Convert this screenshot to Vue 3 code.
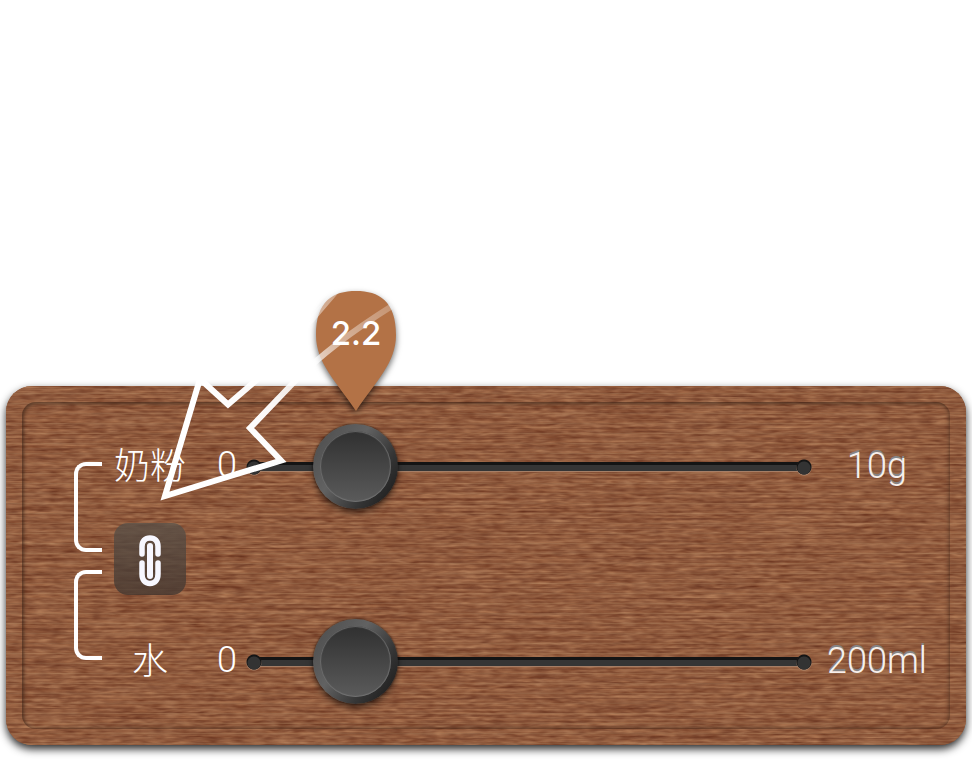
<script setup>
import { computed, ref } from 'vue'

const powder = ref(14.1)
const water = ref(14.1)
const linked = ref(true)

const reading = computed(() => Math.min(10, powder.value * 0.156).toFixed(1))

function powderMoved() {
  if (linked.value) water.value = powder.value
}

function waterMoved() {
  if (linked.value) powder.value = water.value
}
</script>

<template>
  <main class="page">
    <section class="board">
      <svg class="grain" aria-hidden="true">
        <defs>
          <filter id="wood" x="0" y="0" width="100%" height="100%" color-interpolation-filters="sRGB">
            <feTurbulence type="fractalNoise" baseFrequency="0.07 0.32" numOctaves="2" seed="8" result="fibre" />
            <feTurbulence type="fractalNoise" baseFrequency="0.012 0.4" numOctaves="2" seed="3" result="thread" />
            <feComposite in="fibre" in2="thread" operator="arithmetic" k2="0.55" k3="0.5" />
            <feColorMatrix
              values="0.46 0 0 0 0.335
                      0.46 0.04 0 0 0.105
                      0.36 0.06 0 0 0.03
                      0 0 0 0 1"
            />
          </filter>
          <pattern id="threads" width="240" height="10" patternUnits="userSpaceOnUse">
            <path d="M0 2.500H240" stroke="#5e3222" stroke-opacity="0.2" />
            <path d="M0 7.500H240" stroke="#a58a62" stroke-opacity="0.24" />
          </pattern>
        </defs>
        <rect width="100%" height="100%" filter="url(#wood)" />
        <rect width="100%" height="100%" fill="url(#threads)" />
      </svg>

      <div class="panel">
        <div class="brackets" aria-hidden="true">
          <span class="bracket"></span>
          <span class="bracket"></span>
        </div>

        <label class="name" for="powder">奶粉</label>
        <span class="min">0</span>
        <div class="slider">
          <input id="powder" v-model.number="powder" type="range" min="0" max="100" step="0.1" @input="powderMoved" />
          <div class="rail">
            <output class="bubble" for="powder" :style="{ left: powder + '%' }">
              <svg class="drop" viewBox="0 0 82 120" aria-hidden="true">
                <path d="M41 0C64 0 81 10 81 44C81 72 61 90 41 120C21 90 1 72 1 44C1 10 18 0 41 0Z" fill="#b37246" />
              </svg>
              <span class="reading">{{ reading }}</span>
            </output>
          </div>
        </div>
        <span class="max">10g</span>

        <button class="link" type="button" aria-label="联动" :aria-pressed="linked" @click="linked = !linked">
          <svg width="24" height="52" viewBox="0 0 24 52" fill="none" stroke="#f7f7ff" stroke-linecap="round" aria-hidden="true">
            <path d="M4 19V11.500C4 6 7 3 12 3S20 6 20 11.500V19" stroke-width="5.500" />
            <path d="M4 28V39C4 45 7 48.500 12 48.500S20 45 20 39V28" stroke-width="5.500" />
            <path d="M12 11V41" stroke-width="6" />
          </svg>
        </button>

        <label class="name" for="water">水</label>
        <span class="min">0</span>
        <div class="slider">
          <input id="water" v-model.number="water" type="range" min="0" max="100" step="0.1" @input="waterMoved" />
        </div>
        <span class="max">200ml</span>
      </div>

      <svg class="arrow" viewBox="0 0 260 220" fill="none" stroke-width="6" aria-hidden="true">
        <defs>
          <linearGradient id="fade" gradientUnits="userSpaceOnUse" x1="90" y1="150" x2="240" y2="20">
            <stop offset="0" stop-color="#fff" />
            <stop offset="0.25" stop-color="#fff" stop-opacity="0.95" />
            <stop offset="0.5" stop-color="#fff" stop-opacity="0.75" />
            <stop offset="0.7" stop-color="#fff" stop-opacity="0.45" />
            <stop offset="1" stop-color="#fff" stop-opacity="0.25" />
          </linearGradient>
        </defs>
        <path
          d="M187 4Q148 50 110 91L78 118.500L50 93L15 210L131 174.500L100 142L146 94Q180 59 242 20"
          stroke="url(#fade)"
        />
      </svg>
    </section>
  </main>
</template>

<style>
body {
  margin: 0;
  background: #fff;
}
</style>

<style scoped>
.page {
  padding: 386px 6px 14px;
  font-family: Roboto, "Noto Sans CJK SC", sans-serif;
  color: #fff;
}

.board {
  position: relative;
  padding: 16px;
  border-radius: 26px;
  background: #925b3e;
  box-shadow: 0 4px 8px rgba(0, 0, 0, 0.85);
}

.grain {
  position: absolute;
  inset: 0;
  width: 100%;
  height: 100%;
  border-radius: 26px;
}

.panel {
  position: relative;
  display: grid;
  grid-template-columns: 28px 72px 71px minmax(180px, 1fr) 130px;
  grid-template-rows: 85px auto 85px;
  align-items: center;
  padding: 22px 8px 25px 52px;
  border-radius: 14px;
  box-shadow:
    inset 0 0 4px 1px rgba(45, 28, 18, 0.5),
    inset 2px 2px 3px rgba(45, 28, 18, 0.3);
}

.brackets {
  grid-row: 1 / 4;
  align-self: start;
  display: flex;
  flex-direction: column;
  gap: 18px;
  padding-top: 38px;
}

.bracket {
  height: 82px;
  border: 4px solid #fff;
  border-right: 0;
  border-radius: 12px 0 0 12px;
}

.name {
  margin: 0 -12px 0 12px;
  font-size: 36px;
  font-weight: 300;
  line-height: 48px;
  text-align: center;
  white-space: nowrap;
}

.min,
.max {
  padding-bottom: 4px;
  font-size: 36px;
  font-weight: 300;
  line-height: 48px;
}

.min {
  padding-right: 8px;
  text-align: right;
}

.max {
  padding-bottom: 2px;
  color: #f6efec;
  text-align: center;
  text-shadow: 0 -2px 0 #858587;
}

.slider {
  position: relative;
  display: grid;
  height: 85px;
  background:
    radial-gradient(circle at 9px 44px, #333 6px, transparent 7px),
    radial-gradient(circle at calc(100% - 8px) 44px, #333 6px, transparent 7px),
    radial-gradient(circle at 9px 43px, #151515 7px, transparent 8px),
    radial-gradient(circle at calc(100% - 8px) 43px, #151515 7px, transparent 8px),
    radial-gradient(circle at 9px 44px, rgba(185, 150, 127, 0.7) 7px, transparent 8px),
    radial-gradient(circle at calc(100% - 8px) 44px, rgba(185, 150, 127, 0.7) 7px, transparent 8px),
    linear-gradient(transparent 38px, #141414 38px, #141414 41px, #353535 41px, #353535 47px, #a57e66 47px, #a57e66 48px, transparent 48px)
      8px 0 / calc(100% - 16px) 100% no-repeat;
}

.slider input {
  appearance: none;
  width: 100%;
  height: 85px;
  margin: 0;
  background: transparent;
  cursor: pointer;
}

.slider input::-webkit-slider-thumb {
  appearance: none;
  box-sizing: border-box;
  width: 85px;
  height: 85px;
  border: 7px solid transparent;
  border-radius: 50%;
  background:
    linear-gradient(#303030, #5b5b5b) padding-box,
    linear-gradient(125deg, #505050 10%, #626262 40%, #353535 70%, #202020 90%) border-box;
  box-shadow:
    inset 0 0 1px 1px rgba(125, 125, 125, 0.7),
    0 0 2px rgba(20, 15, 12, 0.8),
    0 4px 6px rgba(0, 0, 0, 0.5);
}

.rail {
  position: absolute;
  top: 0;
  left: 42px;
  right: 42px;
  height: 0;
}

.bubble {
  position: absolute;
  bottom: 13px;
  width: 82px;
  height: 120px;
  margin-left: -40px;
  text-align: center;
}

.drop {
  position: absolute;
  inset: 0;
  width: 100%;
  height: 100%;
  overflow: visible;
  filter: drop-shadow(0 3px 3px rgba(0, 0, 0, 0.6));
}

.reading {
  position: relative;
  display: block;
  padding-top: 22px;
  font-family: Inter, "Noto Sans CJK SC", sans-serif;
  font-size: 33px;
  font-weight: 500;
  line-height: 40px;
}

.link {
  grid-column: 2;
  display: grid;
  place-items: center;
  width: 72px;
  height: 72px;
  margin: 14px 0 24px 12px;
  padding: 4px 0 0;
  border: 0;
  border-radius: 14px;
  background: linear-gradient(rgba(85, 79, 72, 0.74), rgba(65, 54, 48, 0.76));
  cursor: pointer;
}

.link + .name {
  grid-column: 2;
}

.arrow {
  position: absolute;
  top: -100px;
  left: 144px;
  width: 260px;
  height: 220px;
  pointer-events: none;
}
</style>
